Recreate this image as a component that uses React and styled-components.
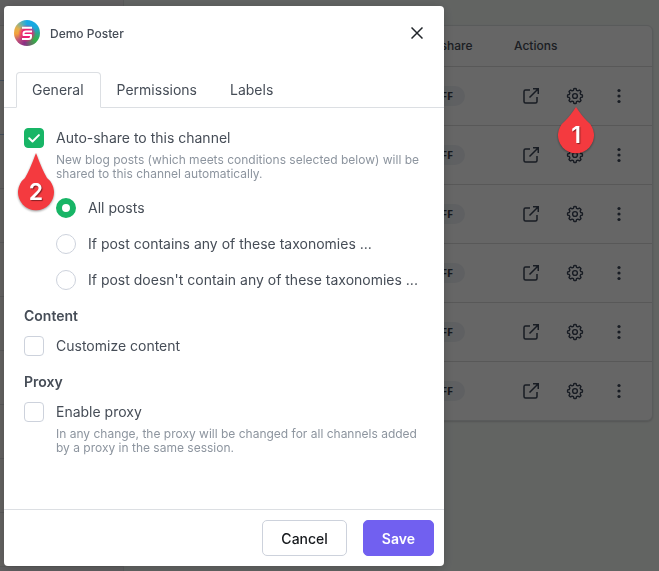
import React, { useState } from 'react';
import styled, { createGlobalStyle } from 'styled-components';

const GlobalStyle = createGlobalStyle`
  *, *::before, *::after {
    box-sizing: border-box;
  }

  body {
    margin: 0;
    background: #f5f9f6;
    font-family: Inter, "Liberation Sans", sans-serif;
    font-size: 14px;
    color: #464d57;
  }

  button, input {
    font: inherit;
    margin: 0;
  }
`;

const Page = styled.div`
  display: flex;
  min-height: 100vh;
`;

const Sidebar = styled.aside`
  width: 124px;
  padding-top: 25px;
  background: #f1eff1;
  border-right: 1px solid #dfe3e3;
`;

const SidebarItem = styled.div`
  height: 54px;
  border-bottom: 1px solid ${(props) => (props.$active ? '#a9c4e4' : '#dfdfdf')};
  background: #faf7f3;

  &:first-child {
    height: 56px;
    border-top: 1px solid #dfdfdf;
  }
`;

const Main = styled.main`
  flex: 1;
  padding: 25px 6px 24px 16px;
`;

const TableCard = styled.div`
  background: #fff;
  border: 1px solid #dfe3e3;
  border-radius: 6px;
  box-shadow: 0 1px 2px rgba(0, 0, 0, 0.15);
`;

const ChannelTable = styled.table`
  width: 100%;
  table-layout: fixed;
  border-collapse: collapse;
`;

const HeadCell = styled.th`
  width: ${(props) => props.$width};
  height: 40px;
  padding: 0 0 0 17px;
  font-size: 12px;
  font-weight: 500;
  text-align: left;
`;

const Cell = styled.td`
  height: 59px;
  padding: 0 0 0 16px;
  border-top: 1px solid #dcdcdc;
`;

const StatusPill = styled.span`
  display: block;
  width: 58px;
  padding-right: 12px;
  border-radius: 10px;
  background: #edf1f5;
  color: #39404c;
  font-family: "Open Sans", sans-serif;
  font-size: 11px;
  font-weight: 700;
  line-height: 20px;
  text-align: right;
`;

const RowActions = styled.div`
  display: flex;
  gap: 8px;
`;

const IconButton = styled.button`
  display: flex;
  align-items: center;
  justify-content: center;
  width: 36px;
  height: 36px;
  padding: 0;
  border: 0;
  background: none;
  color: ${(props) => props.$color || '#3c4658'};
  cursor: pointer;
`;

const Overlay = styled.div`
  position: fixed;
  inset: 0;
  display: flex;
  padding: 6px 4px 5px;
  background: rgba(0, 0, 0, 0.6);
`;

const Modal = styled.section`
  display: flex;
  flex-direction: column;
  width: 100%;
  max-width: 440px;
  background: #fff;
  border-radius: 4px;
  overflow: auto;
  box-shadow: 0 2px 12px rgba(0, 0, 0, 0.2);
`;

const ModalHeader = styled.header`
  display: flex;
  align-items: center;
  gap: 10px;
  padding: 9px 9px 9px 10px;
`;

const ModalTitle = styled.h2`
  flex: 1;
  margin: 0;
  font-size: 12px;
  font-weight: 500;
`;

const TabBar = styled.div`
  display: flex;
  padding: 12px 12px 0;
  border-bottom: 1px solid #dcdfe3;
`;

const Tab = styled.button`
  height: 36px;
  margin-bottom: -1px;
  padding: 0 16px 2px 15px;
  border: 1px solid ${(props) => (props.$active ? '#dcdfe3' : 'transparent')};
  border-bottom-color: ${(props) => (props.$active ? '#fff' : 'transparent')};
  border-radius: 4px 4px 0 0;
  background: none;
  color: inherit;
  cursor: pointer;
`;

const ModalBody = styled.div`
  flex: 1;
  padding: 20px;
`;

const Field = styled.div`
  position: relative;
  display: flex;
  align-items: center;
  gap: 12px;
`;

const Label = styled.label`
  line-height: 20px;
`;

const Check = styled.input`
  appearance: none;
  flex: none;
  width: 20px;
  height: 20px;
  border: 1px solid #cdd2dc;
  border-radius: 4px;
  background: #fff;
  cursor: pointer;

  &:checked {
    border-color: #18b566;
    background: #18b566 url("data:image/svg+xml,%3Csvg xmlns='http://www.w3.org/2000/svg' viewBox='0 0 18 18' fill='none' stroke='white' stroke-width='2' stroke-linecap='round' stroke-linejoin='round'%3E%3Cpath d='M4.2 9.2l3.3 3.3 6.4-6.4'/%3E%3C/svg%3E");
  }
`;

const Radio = styled(Check)`
  border-radius: 50%;

  &:checked {
    border: 6px solid #18b566;
    background: #fff;
  }
`;

const Hint = styled.p`
  margin: 5px 0 0 32px;
  color: #8d959f;
  font-size: 12px;
  line-height: 14px;
`;

const RadioGroup = styled.div`
  display: flex;
  flex-direction: column;
  gap: 16px;
  margin: 17px 0 0 32px;
`;

const SectionTitle = styled.h3`
  margin: 16px 0 10px;
  font-size: 14px;
  font-weight: 600;
  line-height: 20px;
`;

const ModalFooter = styled.footer`
  display: flex;
  justify-content: flex-end;
  gap: 16px;
  padding: 10px;
  border-top: 1px solid #dcdfe3;
`;

const Button = styled.button`
  height: 36px;
  padding: 0 18px;
  border: 1px solid ${(props) => (props.$primary ? '#7160f0' : '#cdd2dc')};
  border-radius: 5px;
  background: ${(props) => (props.$primary ? '#7160f0' : '#fff')};
  color: ${(props) => (props.$primary ? '#fff' : '#15181c')};
  font-weight: ${(props) => (props.$primary ? 600 : 500)};
  cursor: pointer;
`;

const PinBox = styled.div`
  position: absolute;
  top: ${(props) => props.$top};
  left: ${(props) => props.$left};
  right: ${(props) => props.$right};
  display: flex;
  align-items: flex-end;
  justify-content: center;
  width: 36px;
  height: ${(props) => props.$height}px;
  color: #fff;
  font-size: 23px;
  font-weight: 600;
  line-height: 36px;
  text-shadow: 1px 1px 1px rgba(0, 0, 0, 0.45);
  pointer-events: none;

  svg {
    position: absolute;
    inset: 0;
    overflow: visible;
    filter: drop-shadow(0 1px 1px rgba(0, 0, 0, 0.4));
  }

  span {
    position: relative;
  }
`;

// Drop-shaped marker: a 36px circle with a tip pointing up at the target.
function Pin({ number, height, ...place }) {
  const joinY = height - 32;
  const bendY = joinY * 0.66;
  return (
    <PinBox $height={height} {...place}>
      <svg width="36" height={height} aria-hidden="true">
        <path
          d={`M18 0Q24 ${bendY} 29 ${joinY}A18 18 0 1 1 7 ${joinY}Q12 ${bendY} 18 0Z`}
          fill="#f43a3f"
        />
      </svg>
      <span>{number}</span>
    </PinBox>
  );
}

const LogoDisc = styled.span`
  display: flex;
  width: 26px;
  height: 26px;
  border-radius: 50%;
  background: conic-gradient(
    from 0deg,
    #16a9e8,
    #18a8dc 16%,
    #2aa88a 26%,
    #2fb344 36%,
    #5d7a60 44%,
    #8a2f86 54%,
    #c0507a 64%,
    #f2a33c 74%,
    #e3b04c 82%,
    #5fb0b0 92%,
    #16a9e8
  );
`;

function Logo() {
  return (
    <LogoDisc>
      <svg width="26" height="26" viewBox="0 0 26 26" aria-hidden="true">
        <defs>
          <radialGradient id="glow">
            <stop offset="0.5" stopColor="#ec1f73" />
            <stop offset="1" stopColor="#ec1f73" stopOpacity="0" />
          </radialGradient>
        </defs>
        <circle cx="13" cy="13.5" r="9" fill="url(#glow)" />
        <g fill="none" stroke="#fff" strokeWidth="2" strokeLinejoin="round">
          <path d="M8 7.8h10" />
          <path d="M18 11.400h-6q-2.500 0-2.500 2.200v1.400h4" />
          <path d="M13 15h4v1.500q0 2.500-2.500 2.500H8" />
        </g>
      </svg>
    </LogoDisc>
  );
}

function OpenIcon() {
  return (
    <svg width="18" height="18" viewBox="0 0 18 18" fill="none" stroke="currentColor" strokeWidth="1.5" aria-hidden="true">
      <path d="M8 3H3.5Q2 3 2 4.500V14.500Q2 16 3.500 16H13.500Q15 16 15 14.500V10" />
      <path d="M11 1.750H16.250V7M16.250 1.750L7.500 10.500" />
    </svg>
  );
}

const teeth = Array.from({ length: 8 }, (_, i) => {
  const at = (r, deg) => {
    const a = ((i * 45 + deg) * Math.PI) / 180;
    return `${(9 + r * Math.sin(a)).toFixed(2)} ${(9 - r * Math.cos(a)).toFixed(2)}`;
  };
  return `${i ? 'L' : 'M'}${at(5.9, -15)}L${at(7.4, -9)}Q${at(7.7, 0)} ${at(7.4, 9)}L${at(5.9, 15)}`;
}).join('');

function GearIcon() {
  return (
    <svg width="18" height="18" viewBox="0 0 18 18" fill="none" stroke="currentColor" strokeWidth="1.4" strokeLinejoin="round" aria-hidden="true">
      <path d={`${teeth}Z`} />
      <circle cx="9" cy="9" r="2.4" />
    </svg>
  );
}

function DotsIcon() {
  return (
    <svg width="18" height="18" viewBox="0 0 18 18" fill="currentColor" aria-hidden="true">
      <circle cx="9" cy="3.5" r="1.6" />
      <circle cx="9" cy="9" r="1.6" />
      <circle cx="9" cy="14.5" r="1.6" />
    </svg>
  );
}

function ChannelRow() {
  return (
    <tr>
      <Cell />
      <Cell>
        <StatusPill>OFF</StatusPill>
      </Cell>
      <Cell>
        <RowActions>
          <IconButton aria-label="Open"><OpenIcon /></IconButton>
          <IconButton aria-label="Settings"><GearIcon /></IconButton>
          <IconButton aria-label="More"><DotsIcon /></IconButton>
        </RowActions>
      </Cell>
    </tr>
  );
}

const tabs = ['General', 'Permissions', 'Labels'];

const scopes = [
  { id: 'all', label: 'All posts' },
  { id: 'include', label: 'If post contains any of these taxonomies ...' },
  { id: 'exclude', label: "If post doesn't contain any of these taxonomies ..." },
];

function ChannelSettings() {
  const [tab, setTab] = useState('General');
  const [scope, setScope] = useState('all');

  return (
    <Modal role="dialog" aria-labelledby="channel-name">
      <ModalHeader>
        <Logo />
        <ModalTitle id="channel-name">Demo Poster</ModalTitle>
        <IconButton aria-label="Close" $color="#22262b">
          <svg width="12" height="12" viewBox="0 0 12 12" stroke="currentColor" strokeWidth="1.5" aria-hidden="true">
            <path d="M0.500 0.500L11.500 11.500M11.500 0.500L0.500 11.500" />
          </svg>
        </IconButton>
      </ModalHeader>

      <TabBar role="tablist">
        {tabs.map((name) => (
          <Tab key={name} role="tab" aria-selected={tab === name} $active={tab === name} onClick={() => setTab(name)}>
            {name}
          </Tab>
        ))}
      </TabBar>

      <ModalBody>
        <Field>
          <Check type="checkbox" id="auto-share" defaultChecked />
          <Label htmlFor="auto-share">Auto-share to this channel</Label>
          <Pin number={2} height={57} $top="25px" $left="-6px" />
        </Field>
        <Hint>
          New blog posts (which meets conditions selected below) will be shared to this channel automatically.
        </Hint>
        <RadioGroup>
          {scopes.map(({ id, label }) => (
            <Field key={id}>
              <Radio
                type="radio"
                name="scope"
                id={`scope-${id}`}
                checked={scope === id}
                onChange={() => setScope(id)}
              />
              <Label htmlFor={`scope-${id}`}>{label}</Label>
            </Field>
          ))}
        </RadioGroup>

        <SectionTitle>Content</SectionTitle>
        <Field>
          <Check type="checkbox" id="customize" />
          <Label htmlFor="customize">Customize content</Label>
        </Field>

        <SectionTitle>Proxy</SectionTitle>
        <Field>
          <Check type="checkbox" id="proxy" />
          <Label htmlFor="proxy">Enable proxy</Label>
        </Field>
        <Hint>
          In any change, the proxy will be changed for all channels added by a proxy in the same session.
        </Hint>
      </ModalBody>

      <ModalFooter>
        <Button>Cancel</Button>
        <Button $primary>Save</Button>
      </ModalFooter>
    </Modal>
  );
}

function App() {
  return (
    <>
      <GlobalStyle />
      <Page>
        <Sidebar>
          {Array.from({ length: 10 }, (_, i) => (
            <SidebarItem key={i} $active={i < 2} />
          ))}
        </Sidebar>
        <Main>
          <TableCard>
            <ChannelTable>
              <thead>
                <tr>
                  <HeadCell />
                  <HeadCell $width="106px">Auto-share</HeadCell>
                  <HeadCell $width="155px">Actions</HeadCell>
                </tr>
              </thead>
              <tbody>
                {Array.from({ length: 6 }, (_, i) => (
                  <ChannelRow key={i} />
                ))}
              </tbody>
            </ChannelTable>
          </TableCard>
        </Main>
      </Page>
      <Overlay>
        <ChannelSettings />
        <Pin number={1} height={46} $top="107px" $right="65px" />
      </Overlay>
    </>
  );
}

export default App;
